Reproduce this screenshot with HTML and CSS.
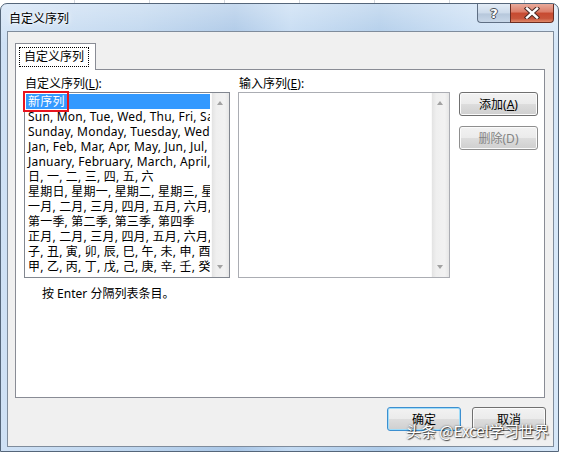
FILE: index.html
```html
<!DOCTYPE html>
<html lang="zh-CN">
<head>
    <meta charset="UTF-8">
    <title>自定义序列</title>
    <link rel="stylesheet" href="styles.css">
</head>
<body>
    <div class="window">
        <div class="titlebar">
            <span class="title">自定义序列</span>
            <div class="caption-btns">
                <button class="cap-btn cap-help">?</button>
                <button class="cap-btn cap-close">
                    <svg width="16" height="12" viewBox="0 0 16 12">
                        <path d="M3 1.5 L13 10.5 M13 1.5 L3 10.5" stroke="#4a2a24" stroke-width="4.4" stroke-linecap="square"/>
                        <path d="M3 1.5 L13 10.5 M13 1.5 L3 10.5" stroke="#fff" stroke-width="2.4" stroke-linecap="square"/>
                    </svg>
                </button>
            </div>
        </div>
        <div class="client">
            <div class="tabs">
                <div class="tab"><span class="focus">自定义序列</span></div>
            </div>
            <div class="tabpage">
                <div class="lists">
                    <div class="col col-left">
                        <div class="label">自定义序列(<u>L</u>):</div>
                        <div class="listbox">
                            <ul class="items">
                                <li class="selected">新序列</li>
                                <li>Sun, Mon, Tue, Wed, Thu, Fri, Sat</li>
                                <li>Sunday, Monday, Tuesday, Wednesday, Thursday</li>
                                <li>Jan, Feb, Mar, Apr, May, Jun, Jul, Aug</li>
                                <li>January, February, March, April, May</li>
                                <li>日, 一, 二, 三, 四, 五, 六</li>
                                <li>星期日, 星期一, 星期二, 星期三, 星期四</li>
                                <li>一月, 二月, 三月, 四月, 五月, 六月, 七月</li>
                                <li>第一季, 第二季, 第三季, 第四季</li>
                                <li>正月, 二月, 三月, 四月, 五月, 六月, 七月</li>
                                <li>子, 丑, 寅, 卯, 辰, 巳, 午, 未, 申, 酉, 戌, 亥</li>
                                <li>甲, 乙, 丙, 丁, 戊, 己, 庚, 辛, 壬, 癸</li>
                            </ul>
                            <div class="scrollbar">
                                <span class="arrow up"></span>
                                <span class="arrow down"></span>
                            </div>
                            <div class="mark"></div>
                        </div>
                    </div>
                    <div class="col col-right">
                        <div class="label">输入序列(<u>E</u>):</div>
                        <div class="listbox editbox">
                            <div class="items"></div>
                            <div class="scrollbar">
                                <span class="arrow up"></span>
                                <span class="arrow down"></span>
                            </div>
                        </div>
                    </div>
                    <div class="col col-btns">
                        <button class="btn">添加(<u>A</u>)</button>
                        <button class="btn" disabled>删除(D)</button>
                    </div>
                </div>
                <p class="hint">按 Enter 分隔列表条目。</p>
            </div>
            <div class="footer">
                <button class="btn btn-default">确定</button>
                <button class="btn">取消</button>
            </div>
        </div>
    </div>
    <div class="watermark">头条 @Excel学习世界</div>
</body>
</html>
```

FILE: styles.css
```css
* {
    margin: 0;
    padding: 0;
    box-sizing: border-box;
}

body {
    width: 562px;
    height: 452px;
    overflow: hidden;
    position: relative;
    background: #fff repeating-linear-gradient(to right, transparent 0 74px, #d4d8de 74px 75px);
    font-family: "Noto Sans", "Noto Sans CJK SC", sans-serif;
    font-size: 12px;
    color: #000;
}

.window {
    margin-top: 3px;
    width: 559px;
    height: 449px;
    border: 1px solid #55667a;
    border-radius: 7px 7px 0 0;
    background:
        linear-gradient(to bottom, rgba(255, 255, 255, 0.35), rgba(255, 255, 255, 0) 40px),
        linear-gradient(to right, #cfe1f5 0%, #bdd5ee 25%, #a9c6e6 42%, #c3daf2 52%, #aecbe9 68%, #c9def4 85%, #d6e7f8 100%);
    display: flex;
    flex-direction: column;
}

.titlebar {
    height: 27px;
    display: flex;
    justify-content: space-between;
    align-items: flex-start;
    padding: 0 4px 0 8px;
}

.title {
    padding-top: 7px;
    line-height: 16px;
    font-size: 12px;
    text-shadow: 0 0 6px #fff, 0 0 3px #fff;
}

.caption-btns {
    display: flex;
}

.cap-btn {
    height: 19px;
    border: 1px solid #5f6f84;
    border-top: none;
    display: flex;
    align-items: center;
    justify-content: center;
}

.cap-help {
    width: 33px;
    border-right: none;
    border-radius: 0 0 0 4px;
    background: linear-gradient(to bottom, #e3ecf6 0%, #ccdaea 50%, #b6c7db 55%, #c8d7e8 100%);
    color: #fff;
    font-family: "DejaVu Sans", sans-serif;
    font-weight: bold;
    font-size: 13px;
    text-shadow: 1px 0 0 #4a4f57, -1px 0 0 #4a4f57, 0 1px 0 #4a4f57, 0 -1px 0 #4a4f57;
}

.cap-close {
    width: 44px;
    border-color: #6b2d22;
    border-radius: 0 0 4px 0;
    background: linear-gradient(to bottom, #e9aa9b 0%, #dc7d68 45%, #c74a31 50%, #c8553b 80%, #e08a6c 100%);
}

.client {
    flex: 1;
    margin: 0 4px 4px 6px;
    border: 1px solid #7f8c9c;
    background: #f0f0f0;
    display: flex;
    flex-direction: column;
}

.tabs {
    display: flex;
    padding: 11px 0 0 7px;
}

.tab {
    position: relative;
    z-index: 1;
    height: 27px;
    margin-bottom: -1px;
    padding: 3px 6px 0 3px;
    background: #fff;
    border: 1px solid #898c95;
    border-bottom: none;
}

.focus {
    display: block;
    height: 20px;
    line-height: 18px;
    padding: 0 4px;
    border: 1px dotted #000;
}

.tabpage {
    width: 530px;
    height: 329px;
    margin-left: 7px;
    background: #fff;
    border: 1px solid #898c95;
}

.lists {
    display: flex;
    padding: 6px 0 0 8px;
}

.label {
    line-height: 16px;
    padding-left: 1px;
}

.col-left {
    width: 206px;
    margin-right: 8px;
}

.col-right {
    width: 212px;
    margin-right: 9px;
}

.col-btns {
    width: 79px;
    padding-top: 16px;
    display: flex;
    flex-direction: column;
    gap: 10px;
}

.listbox {
    position: relative;
    height: 186px;
    border: 1px solid #828790;
    display: flex;
    background: #fff;
}

.editbox {
    border-color: #abadb3;
}

.items {
    flex: 1;
    min-width: 0;
    list-style: none;
    padding: 1px 1px 0 1px;
    overflow: hidden;
}

.items li {
    height: 15px;
    line-height: 15px;
    padding-left: 2px;
    white-space: nowrap;
    overflow: hidden;
    letter-spacing: 0.2px;
}

.items li.selected {
    background: #3399ff;
    color: #fff;
}

.scrollbar {
    width: 18px;
    position: relative;
    background: linear-gradient(to right, #e3e3e3 0%, #efefef 25%, #f2f2f2 75%, #e6e6e6 100%);
    border-left: 1px solid #fafafa;
}

.arrow {
    position: absolute;
    left: 5px;
    width: 0;
    height: 0;
    border-left: 3.5px solid transparent;
    border-right: 3.5px solid transparent;
}

.arrow.up {
    top: 8px;
    border-bottom: 4px solid #a2a2a2;
}

.arrow.down {
    bottom: 8px;
    border-top: 4px solid #a2a2a2;
}

.mark {
    position: absolute;
    left: -2px;
    top: -2px;
    width: 46px;
    height: 21px;
    border: 2px solid #e8141e;
}

.btn {
    width: 79px;
    height: 24px;
    border: 1px solid #707070;
    border-radius: 3px;
    background: linear-gradient(to bottom, #f2f2f2 0%, #ebebeb 49%, #dddddd 50%, #cfcfcf 100%);
    box-shadow: inset 0 0 0 1px #fbfbfb;
    font-family: "Noto Sans", "Noto Sans CJK SC", sans-serif;
    font-size: 12px;
    color: #000;
}

.btn:disabled {
    color: #838383;
    border-color: #8f8f8f;
}

.hint {
    margin-top: 8px;
    padding-left: 26px;
    line-height: 16px;
}

.footer {
    display: flex;
    justify-content: flex-end;
    gap: 11px;
    padding: 9px 7px 0 0;
}

.footer .btn {
    width: 74px;
}

.btn-default {
    border-color: #3c8fd0;
    box-shadow: inset 0 0 0 1px #9fdcf9;
}

.watermark {
    position: absolute;
    left: 406px;
    top: 421px;
    font-family: "Noto Sans CJK SC", sans-serif;
    font-size: 15px;
    line-height: 20px;
    color: #fff;
    text-shadow: 1px 1px 1px rgba(0, 0, 0, 0.7), 0 0 2px rgba(0, 0, 0, 0.6);
}
```
